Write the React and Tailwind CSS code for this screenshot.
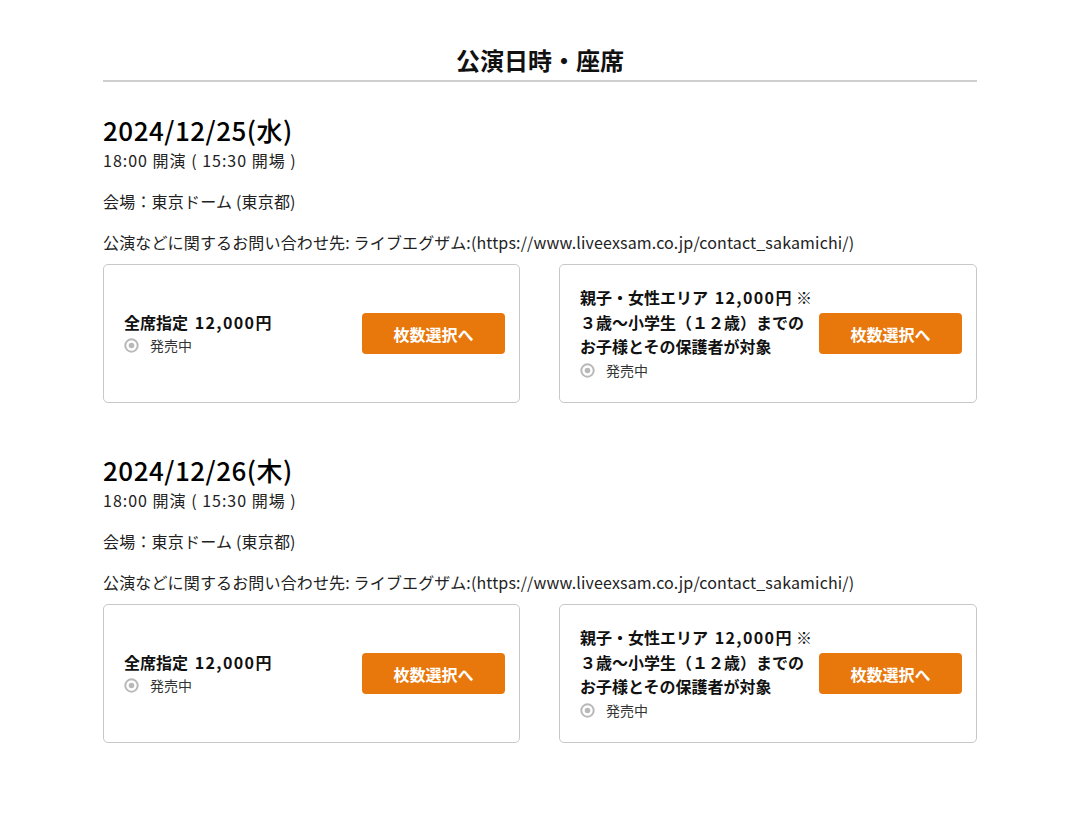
import React from 'react'

const font = { fontFamily: '"Noto Sans CJK JP", "Noto Sans", sans-serif' }

const URL_TEXT = 'ライブエグザム:(https://www.liveexsam.co.jp/contact_sakamichi/)'

const performances = [
  { date: '2024/12/25(水)' },
  { date: '2024/12/26(木)' },
]

// Latin digits run a bit wider in the reference font
function Price() {
  return <span className="ml-[3px] tracking-[1.4px]">12,000</span>
}

// ── Status mark ───────────────────────────────────────────────────────────────

function OnSale() {
  return (
    <div className="flex items-center gap-[11px] text-[14px] text-[#333] leading-[23px]">
      <svg className="w-[15px] h-[15px]" viewBox="0 0 15 15">
        <circle cx="7.5" cy="7.5" r="6.2" fill="none" stroke="#b9b9b9" strokeWidth="2" />
        <circle cx="7.5" cy="7.5" r="2.8" fill="#b9b9b9" />
      </svg>
      <span>発売中</span>
    </div>
  )
}

// ── Seat card ─────────────────────────────────────────────────────────────────

function SeatCard({ children }) {
  return (
    <div className="flex items-center justify-between h-[139px] rounded-[5px] border border-[#c8c8c8] pl-[20px] pr-[14px]">
      <div>
        <div className="text-[16px] font-bold text-[#111] leading-[24.5px]">{children}</div>
        <OnSale />
      </div>
      <button
        type="button"
        className="w-[143px] h-[41px] shrink-0 rounded-[4px] bg-[#e8780c] text-white text-[16px] font-bold"
      >
        枚数選択へ
      </button>
    </div>
  )
}

function Performance({ date }) {
  return (
    <section className="mb-[52px]">
      <h2 className="text-[26px] font-medium text-black leading-[30px] tracking-[0.5px]">{date}</h2>
      <p className="text-[16px] text-[#222] leading-[22px] mt-[4px] tracking-[1px]">18:00 開演 ( 15:30 開場 )</p>
      <p className="text-[16px] text-[#222] leading-[22px] mt-[19px] tracking-[0.2px]">会場：東京ドーム (東京都)</p>
      <p className="text-[16px] text-[#222] leading-[22px] mt-[19px] tracking-[0.15px]">公演などに関するお問い合わせ先: {URL_TEXT}</p>
      <div className="grid grid-cols-[417px_418px] gap-[39px] mt-[11px]">
        <SeatCard>全席指定 <Price />円</SeatCard>
        <SeatCard>
          親子・女性エリア <Price />円 <span className="ml-[1px]">※</span><br />
          ３歳〜小学生（１２歳）までの<br />
          お子様とその保護者が対象
        </SeatCard>
      </div>
    </section>
  )
}

export default function App() {
  return (
    <div className="min-h-screen bg-white" style={font}>
      <div className="w-[874px] ml-[103px] pt-[44px]">
        <h1 className="text-center text-[24px] font-bold text-[#111] leading-[32px] pb-[4px] border-b-2 border-[#cfcfcf]">
          公演日時・座席
        </h1>
        <div className="mt-[33px]">
          {performances.map((p) => (
            <Performance key={p.date} date={p.date} />
          ))}
        </div>
      </div>
    </div>
  )
}
